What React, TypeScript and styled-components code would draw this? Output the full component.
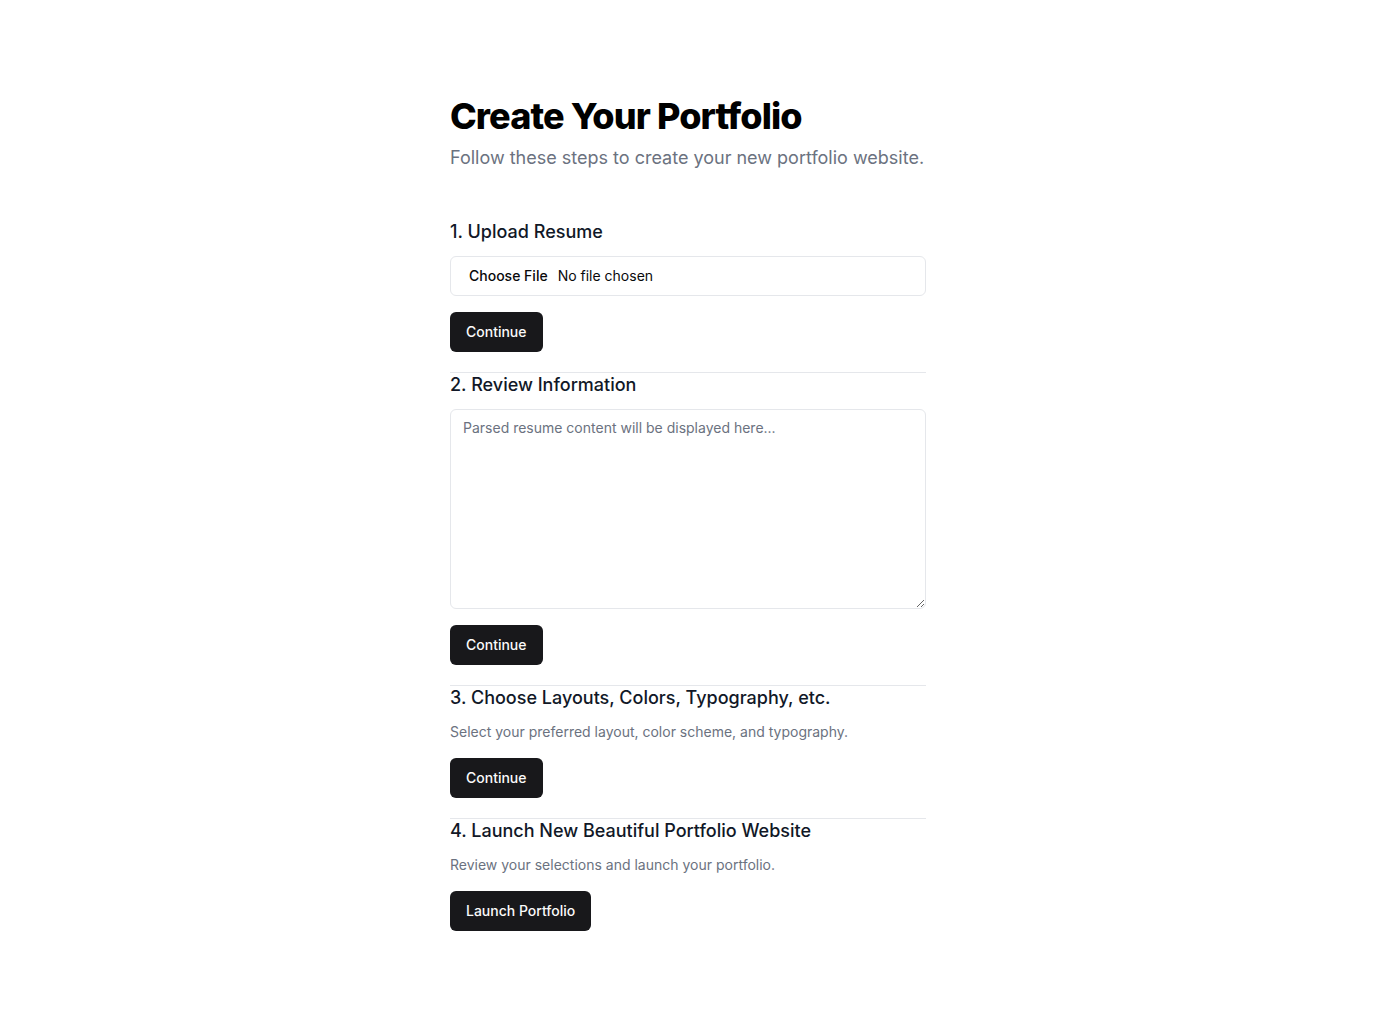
import React from "react";
import styled, { createGlobalStyle } from "styled-components";

const GlobalStyle = createGlobalStyle`
  *, *::before, *::after { box-sizing: border-box; }
  html, body { margin: 0; padding: 0; background: #ffffff; }
  body {
    font-family: Inter, "Noto Sans", sans-serif;
    color: #09090b;
    -webkit-font-smoothing: antialiased;
  }
`;

const Page = styled.main`
  width: 476px;
  margin: 0 auto;
  padding: 96px 0 64px;
  display: flex;
  flex-direction: column;
`;

const Header = styled.header`
  display: flex;
  flex-direction: column;
  gap: 8px;
  margin-bottom: 48px;
`;

const Title = styled.h1`
  margin: 0;
  font-size: 36px;
  line-height: 40px;
  font-weight: 800;
  letter-spacing: -0.025em;
  color: #000000;
`;

const Subtitle = styled.p`
  margin: 0;
  font-size: 18px;
  line-height: 28px;
  color: #6b7280;
`;

const Section = styled.section<{ $divided?: boolean }>`
  display: flex;
  flex-direction: column;
  align-items: flex-start;
  border-top: ${(p) => (p.$divided ? "1px solid #e5e7eb" : "none")};
  padding-bottom: 20px;
`;

const StepTitle = styled.h2`
  margin: 0 0 12px;
  font-size: 18px;
  line-height: 24px;
  font-weight: 500;
  color: #111827;
`;

const Description = styled.p`
  margin: 0 0 16px;
  font-size: 14px;
  line-height: 20px;
  color: #6b7280;
`;

const FileInput = styled.input`
  width: 100%;
  height: 40px;
  margin: 0 0 16px;
  padding: 9px 12px 7px;
  border: 1px solid #e5e7eb;
  border-radius: 6px;
  background: #ffffff;
  font-family: Inter, "Noto Sans", sans-serif;
  font-size: 14px;
  line-height: 20px;
  color: #09090b;

  &::file-selector-button {
    border: 0;
    background: transparent;
    font-family: Inter, "Noto Sans", sans-serif;
    font-size: 14px;
    font-weight: 500;
    color: #09090b;
    padding: 0 6px;
    margin-right: 4px;
  }
`;

const TextArea = styled.textarea`
  width: 100%;
  height: 200px;
  margin: 0 0 16px;
  padding: 8px 12px;
  border: 1px solid #e5e7eb;
  border-radius: 6px;
  background: #ffffff;
  font-family: Inter, "Noto Sans", sans-serif;
  font-size: 14px;
  line-height: 20px;
  color: #09090b;
  outline: none;

  &::placeholder {
    color: #6b7280;
  }
`;

const Button = styled.button`
  height: 40px;
  padding: 0 16px;
  border: 0;
  border-radius: 6px;
  background: #18181b;
  color: #fafafa;
  font-family: Inter, "Noto Sans", sans-serif;
  font-size: 14px;
  font-weight: 500;
  line-height: 20px;
  cursor: pointer;
`;

export default function App() {
  return (
    <>
      <GlobalStyle />
      <Page>
        <Header>
          <Title>Create Your Portfolio</Title>
          <Subtitle>Follow these steps to create your new portfolio website.</Subtitle>
        </Header>

        <Section>
          <StepTitle>1. Upload Resume</StepTitle>
          <FileInput type="file" />
          <Button>Continue</Button>
        </Section>

        <Section $divided>
          <StepTitle>2. Review Information</StepTitle>
          <TextArea placeholder="Parsed resume content will be displayed here..." />
          <Button>Continue</Button>
        </Section>

        <Section $divided>
          <StepTitle>3. Choose Layouts, Colors, Typography, etc.</StepTitle>
          <Description>Select your preferred layout, color scheme, and typography.</Description>
          <Button>Continue</Button>
        </Section>

        <Section $divided>
          <StepTitle>4. Launch New Beautiful Portfolio Website</StepTitle>
          <Description>Review your selections and launch your portfolio.</Description>
          <Button>Launch Portfolio</Button>
        </Section>
      </Page>
    </>
  );
}
